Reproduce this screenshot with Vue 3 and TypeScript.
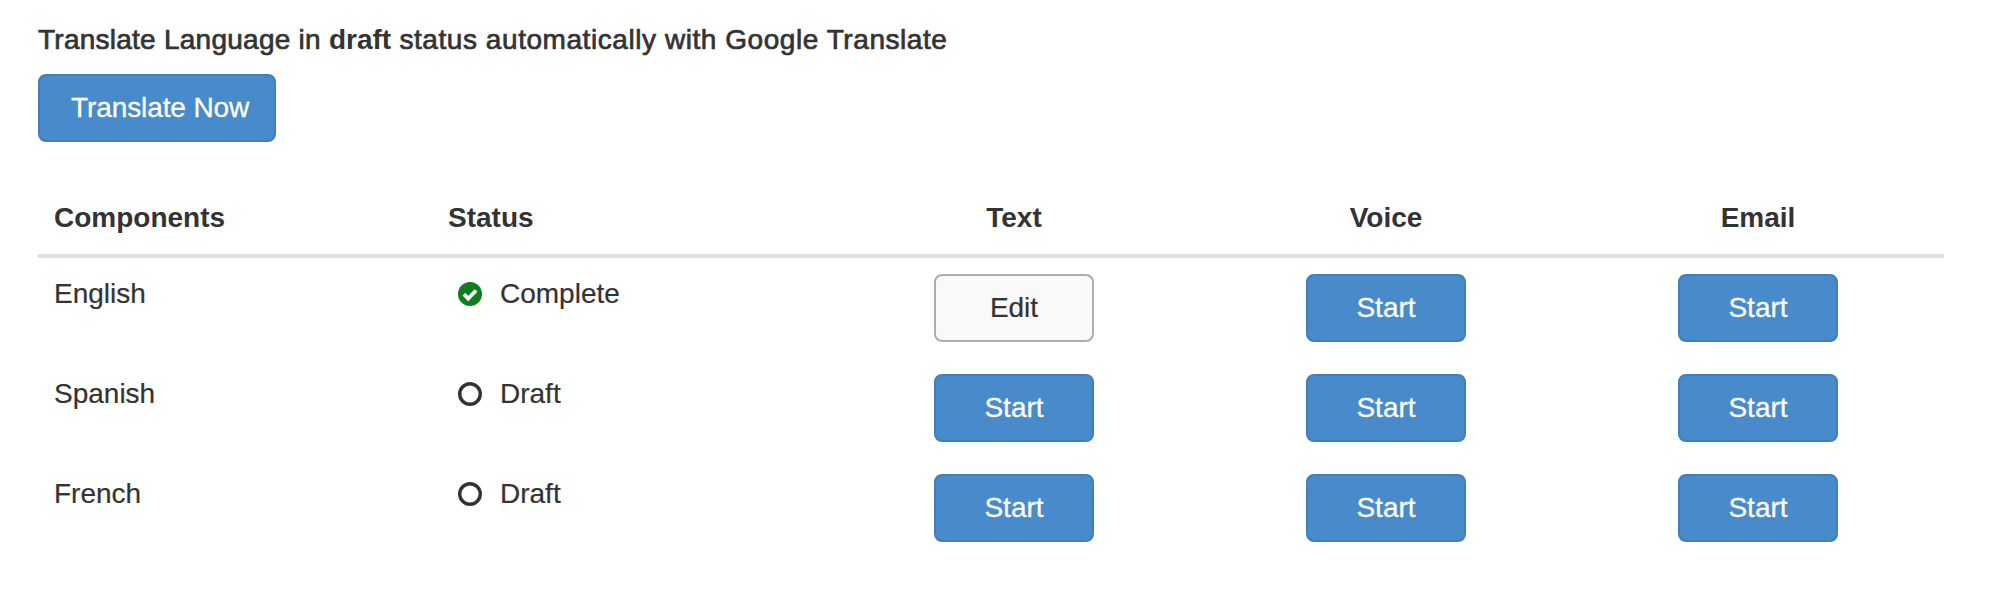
<script setup lang="ts">
type Cell = { label: string; primary: boolean }
type Row = { name: string; status: string; complete: boolean; cells: Cell[] }

const start: Cell = { label: 'Start', primary: true }
const rows: Row[] = [
  { name: 'English', status: 'Complete', complete: true, cells: [{ label: 'Edit', primary: false }, start, start] },
  { name: 'Spanish', status: 'Draft', complete: false, cells: [start, start, start] },
  { name: 'French', status: 'Draft', complete: false, cells: [start, start, start] },
]
</script>

<template>
  <main class="page">
    <p class="intro"><span class="lead">Translate Language in </span><b>draft</b> status automatically with Google Translate</p>
    <button class="btn primary now" type="button">Translate Now</button>
    <table class="grid">
      <colgroup>
        <col class="c-name" />
        <col class="c-status" />
        <col class="c-act" />
        <col class="c-act" />
        <col class="c-act" />
      </colgroup>
      <thead>
        <tr>
          <th>Components</th>
          <th>Status</th>
          <th class="mid">Text</th>
          <th class="mid">Voice</th>
          <th class="mid">Email</th>
        </tr>
      </thead>
      <tbody>
        <tr v-for="row in rows" :key="row.name">
          <td>{{ row.name }}</td>
          <td>
            <span class="status">
              <svg v-if="row.complete" class="icon" viewBox="0 0 24 24" aria-hidden="true">
                <circle cx="12" cy="12" r="12" fill="#0f7d1c" />
                <path d="M5.9 12.2l4.3 4.3 7.9-8" fill="none" stroke="#fff" stroke-width="3.8" />
              </svg>
              <svg v-else class="icon" viewBox="0 0 24 24" aria-hidden="true">
                <circle cx="12" cy="12" r="10.3" fill="none" stroke="#333" stroke-width="3.4" />
              </svg>
              {{ row.status }}
            </span>
          </td>
          <td v-for="(cell, i) in row.cells" :key="i" class="mid">
            <button class="btn action" :class="cell.primary ? 'primary' : 'plain'" type="button">{{ cell.label }}</button>
          </td>
        </tr>
      </tbody>
    </table>
  </main>
</template>

<style scoped>
.page {
  padding: 20px 50px 0 38px;
  font-family: "Liberation Sans", Arial, sans-serif;
  font-size: 28px;
  line-height: 40px;
  color: #333;
}
.intro {
  margin: 0 0 14px;
  font-weight: 400;
  letter-spacing: 0.56px;
  -webkit-text-stroke: 0.7px #333;
}
.lead {
  letter-spacing: 0.25px;
}
.intro b {
  font-weight: 700;
  letter-spacing: 0;
  -webkit-text-stroke: 0;
}
td {
  -webkit-text-stroke: 0.2px currentColor;
}
.btn {
  display: inline-block;
  box-sizing: border-box;
  height: 68px;
  margin: 0;
  padding: 0;
  border-radius: 8px;
  border: 2px solid;
  font: inherit;
  vertical-align: top;
}
.primary {
  background: #488aca;
  border-color: #3f7fbb;
  color: #fff;
  -webkit-text-stroke: 0.3px #fff;
}
.plain {
  background: #f9f9f9;
  border-color: #adadad;
  color: #333;
}
.now {
  display: block;
  width: 238px;
  padding-left: 31px;
  text-align: left;
  letter-spacing: -0.1px;
}
.action {
  width: 160px;
}
.grid {
  width: 1906px;
  margin-top: 40px;
  border-collapse: collapse;
  table-layout: fixed;
}
.c-name {
  width: 394px;
}
.c-status {
  width: 396px;
}
.c-act {
  width: 372px;
}
th,
td {
  padding: 16px;
  text-align: left;
  vertical-align: top;
}
th {
  border-bottom: 4px solid #ddd;
  font-weight: 700;
}
.mid {
  text-align: center;
}
.status {
  display: flex;
  align-items: center;
  gap: 18px;
  padding-left: 10px;
}
.icon {
  flex: none;
  width: 24px;
  height: 24px;
}
</style>
